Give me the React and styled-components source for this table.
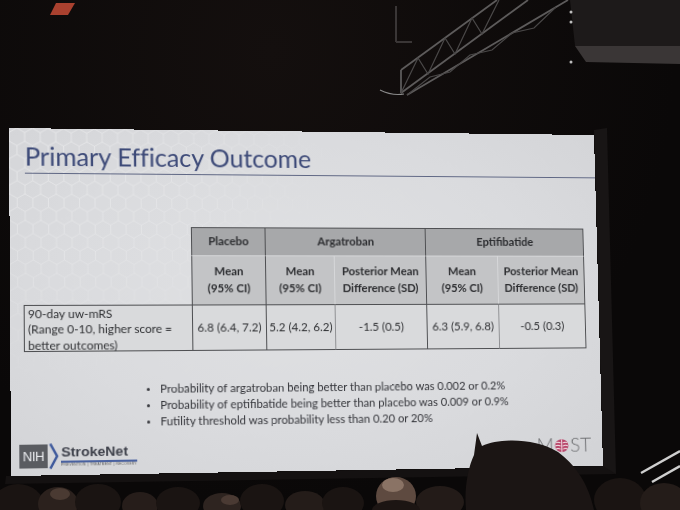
import React from 'react';
import styled, { createGlobalStyle } from 'styled-components';

// corners of the projected slide in the photo (TL, TR, BR, BL)
const SLIDE_W = 590;
const SLIDE_H = 340;
const CORNERS = [[9, 128], [594, 135], [603, 466], [11, 476]];

function quadMatrix(w, h, [x0, y0], [x1, y1], [x2, y2], [x3, y3]) {
  const dx1 = x1 - x2, dx2 = x3 - x2, dx3 = x0 - x1 + x2 - x3;
  const dy1 = y1 - y2, dy2 = y3 - y2, dy3 = y0 - y1 + y2 - y3;
  const den = dx1 * dy2 - dx2 * dy1;
  const g = (dx3 * dy2 - dx2 * dy3) / den;
  const k = (dx1 * dy3 - dx3 * dy1) / den;
  const a = x1 - x0 + g * x1, b = x3 - x0 + k * x3;
  const d = y1 - y0 + g * y1, e = y3 - y0 + k * y3;
  const m = [a / w, d / w, 0, g / w, b / h, e / h, 0, k / h, 0, 0, 1, 0, x0, y0, 0, 1];
  return `matrix3d(${m.map((v) => v.toFixed(7)).join(',')})`;
}

const SLIDE_TRANSFORM = quadMatrix(SLIDE_W, SLIDE_H, ...CORNERS);

const HEX =
  "url(\"data:image/svg+xml;utf8,<svg xmlns='http://www.w3.org/2000/svg' width='15' height='26'><path d='M7.5 0L15 4.33V13L7.5 17.32L0 13V4.33ZM7.5 17.32V26' fill='none' stroke='white' stroke-opacity='0.5' stroke-width='0.8'/></svg>\")";

const GlobalStyle = createGlobalStyle`
  html, body {
    margin: 0;
    padding: 0;
    background: #0b0909;
  }
`;

const BORDER = {
  dark: '1px solid #4e4f52',
  mid: '1px solid #8f9093',
  light: '1px solid #d6d7d9',
  none: '0',
};

const COLUMNS = [
  { key: 'placebo', group: 'Placebo', mean: '6.8 (6.4, 7.2)' },
  { key: 'arg', group: 'Argatroban', mean: '5.2 (4.2, 6.2)', diff: '-1.5 (0.5)' },
  { key: 'ept', group: 'Eptifibatide', mean: '6.3 (5.9, 6.8)', diff: '-0.5 (0.3)' },
];

const BULLETS = [
  'Probability of argatroban being better than placebo was 0.002 or 0.2%',
  'Probability of eptifibatide being better than placebo was 0.009 or 0.9%',
  'Futility threshold was probability less than 0.20 or 20%',
];

export default function App() {
  return (
    <>
      <GlobalStyle />
      <Scene>
        <Backdrop viewBox="0 0 680 510">
          <polygon points="594,130 607,128 616,474 603,472" fill="#181515" />
          <polygon points="6,476 603,466 616,474 5,484" fill="#141111" />
          <polygon points="50,15 68,15 75,3 56,3" fill="#a9412f" />
          <g stroke="#5d5b5b" strokeWidth="1.8" fill="none">
            <line x1="401" y1="70" x2="497" y2="0" />
            <line x1="401" y1="93" x2="528" y2="0" />
            <line x1="407" y1="95" x2="568" y2="0" />
            <line x1="401" y1="70" x2="401" y2="93" />
          </g>
          <g stroke="#4a4848" strokeWidth="1.2" fill="none">
            <polyline points="401,93 418,58 428,74 445,38 455,54 472,18 482,34 499,0" />
            <polyline points="407,95 430,77 450,72 470,55 492,50 512,33 534,28 556,7" />
          </g>
          <path d="M380 90 Q392 96 404 94" stroke="#8a8a8a" strokeWidth="1.2" fill="none" />
          <g stroke="#3a3636" strokeWidth="2" fill="none">
            <line x1="396" y1="6" x2="396" y2="42" />
            <line x1="396" y1="42" x2="412" y2="42" />
          </g>
          <polygon points="570,0 680,0 680,46 575,46" fill="#1d1a1a" />
          <polygon points="575,46 680,46 680,64 586,62" fill="#3a3636" />
          <g fill="#bdbdbd">
            <circle cx="571" cy="12" r="1.5" />
            <circle cx="571" cy="22" r="1.5" />
            <circle cx="571" cy="62" r="1.5" />
          </g>
          <g stroke="#cfcfcf" strokeWidth="2.4">
            <line x1="641" y1="473" x2="680" y2="451" />
            <line x1="652" y1="482" x2="680" y2="466" />
          </g>
        </Backdrop>

        <Slide>
          <TitleBar>
            <Title>Primary Efficacy Outcome</Title>
          </TitleBar>

          <Grid>
            <Corner />
            {COLUMNS.map((col) => (
              <Cell
                key={`${col.key}-group`}
                $bg="#a7a8aa"
                $left="dark"
                $top="dark"
                $right={col.key === 'ept'}
                $span={col.diff ? 2 : 1}
              >
                <HeadText>{col.group}</HeadText>
              </Cell>
            ))}

            {COLUMNS.map((col) => (
              <React.Fragment key={`${col.key}-sub`}>
                <Cell $bg="#c3c4c6" $left="dark" $top="light">
                  <HeadText>Mean<br />(95% CI)</HeadText>
                </Cell>
                {col.diff && (
                  <Cell $bg="#c3c4c6" $left="light" $top="light" $right={col.key === 'ept'}>
                    <HeadText>Posterior Mean<br />Difference (SD)</HeadText>
                  </Cell>
                )}
              </React.Fragment>
            ))}

            <LabelCell>
              90-day uw-mRS<br />
              (Range 0-10, higher score =<br />
              better outcomes)
            </LabelCell>
            {COLUMNS.map((col) => (
              <React.Fragment key={`${col.key}-val`}>
                <Cell $bg="#d9dadc" $left="dark" $top="dark" $bottom>
                  <ValueText>{col.mean}</ValueText>
                </Cell>
                {col.diff && (
                  <Cell $bg="#d9dadc" $left="mid" $top="dark" $bottom $right={col.key === 'ept'}>
                    <ValueText>{col.diff}</ValueText>
                  </Cell>
                )}
              </React.Fragment>
            ))}
          </Grid>

          <Bullets>
            {BULLETS.map((text) => (
              <Bullet key={text}>{text}</Bullet>
            ))}
          </Bullets>

          <Footer>
            <NihLogo>
              <NihBox>NIH</NihBox>
              <svg width="10" height="25" viewBox="0 0 10 25">
                <polyline points="1.5,0.5 8,12.5 1.5,24.5" fill="none" stroke="#3f5a9c" strokeWidth="2.4" />
              </svg>
              <NihBrand>
                <NihName>StrokeNet</NihName>
                <NihTag>PREVENTION | TREATMENT | RECOVERY</NihTag>
              </NihBrand>
            </NihLogo>

            <MostLogo>
              M
              <svg width="15" height="15" viewBox="0 0 16 16">
                <ellipse cx="8" cy="8.2" rx="7.4" ry="7" fill="#b8466a" />
                <g stroke="#f3e6ea" strokeWidth="1" fill="none" strokeLinecap="round">
                  <line x1="8" y1="1.5" x2="8" y2="15" />
                  <path d="M2 5 Q4.5 4 6.5 5.2" />
                  <path d="M1.5 8.3 Q4 7.2 6.5 8.5" />
                  <path d="M2.2 11.5 Q4.5 10.6 6.5 11.8" />
                  <path d="M9.5 5.2 Q11.5 4 14 5" />
                  <path d="M9.5 8.5 Q12 7.2 14.5 8.3" />
                  <path d="M9.5 11.8 Q11.5 10.6 13.8 11.5" />
                </g>
              </svg>
              ST
            </MostLogo>
          </Footer>
        </Slide>

        <Crowd viewBox="0 0 680 510">
          <g fill="#1a1412">
            <ellipse cx="18" cy="506" rx="26" ry="22" />
            <ellipse cx="58" cy="504" rx="20" ry="17" fill="#2b211d" />
            <ellipse cx="98" cy="502" rx="23" ry="18" />
            <ellipse cx="140" cy="506" rx="18" ry="14" fill="#261d1a" />
            <ellipse cx="178" cy="503" rx="22" ry="16" />
            <ellipse cx="222" cy="506" rx="19" ry="13" fill="#2e2420" />
            <ellipse cx="262" cy="501" rx="22" ry="17" />
            <ellipse cx="305" cy="505" rx="20" ry="14" fill="#241c19" />
            <ellipse cx="343" cy="503" rx="21" ry="16" />
            <ellipse cx="440" cy="502" rx="24" ry="16" fill="#231b18" />
            <ellipse cx="620" cy="500" rx="26" ry="22" />
            <ellipse cx="664" cy="503" rx="24" ry="20" fill="#241c19" />
          </g>
          <ellipse cx="396" cy="496" rx="20" ry="19" fill="#5e4a40" />
          <ellipse cx="393" cy="485" rx="11" ry="7" fill="#8a7365" />
          <ellipse cx="396" cy="510" rx="24" ry="10" fill="#1c1513" />
          <ellipse cx="230" cy="500" rx="9" ry="5" fill="#4a3a33" />
          <ellipse cx="60" cy="494" rx="10" ry="6" fill="#4a3a32" />
          <path
            d="M466 510 C464 488 468 468 474 455 L477 433 L482 446 C500 438 535 438 558 452 C575 465 588 482 594 510 Z"
            fill="#1b1514"
          />
        </Crowd>
      </Scene>
    </>
  );
}

const Scene = styled.div`
  position: relative;
  width: 680px;
  height: 510px;
  overflow: hidden;
  background: radial-gradient(ellipse at 40% 10%, #140f0e 0%, #0a0808 70%);
`;

const Backdrop = styled.svg`
  position: absolute;
  inset: 0;
  width: 680px;
  height: 510px;
  z-index: 0;
`;

const Crowd = styled.svg`
  position: absolute;
  inset: 0;
  width: 680px;
  height: 510px;
  z-index: 2;
  pointer-events: none;
`;

const Slide = styled.div`
  position: relative;
  z-index: 1;
  box-sizing: border-box;
  width: ${SLIDE_W}px;
  height: ${SLIDE_H}px;
  display: flex;
  flex-direction: column;
  transform-origin: 0 0;
  transform: ${SLIDE_TRANSFORM};
  background: radial-gradient(ellipse at 48% 45%, #e0e1e3 0%, #dadbde 55%, #d2d3d6 100%);
  font-family: Lato, "Open Sans", sans-serif;
  color: #2f3033;

  &::before {
    content: '';
    position: absolute;
    inset: 0;
    background-image: ${HEX};
    -webkit-mask-image: radial-gradient(ellipse 70% 95% at 0% 0%, #000 0%, rgba(0, 0, 0, 0.5) 45%, transparent 80%);
    mask-image: radial-gradient(ellipse 70% 95% at 0% 0%, #000 0%, rgba(0, 0, 0, 0.5) 45%, transparent 80%);
    pointer-events: none;
  }

  & > * {
    position: relative;
  }
`;

const TitleBar = styled.div`
  margin: 13px 0 0 15px;
  padding-bottom: 1px;
  border-bottom: 1.5px solid #5f6784;
`;

const Title = styled.h1`
  margin: 0;
  font-size: 24.9px;
  line-height: 1.2;
  font-weight: 400;
  color: #3d4a78;
  letter-spacing: -0.1px;
`;

const Grid = styled.div`
  display: grid;
  grid-template-columns: 163px 73px 69px 93px 74px 91px;
  grid-template-rows: 28px 49px 46px;
  margin: 52px 0 0 13px;
`;

const Corner = styled.div`
  grid-row: span 2;
`;

const Cell = styled.div`
  box-sizing: border-box;
  display: flex;
  align-items: center;
  justify-content: center;
  text-align: center;
  grid-column: span ${(p) => p.$span || 1};
  background: ${(p) => p.$bg};
  border-left: ${(p) => BORDER[p.$left || 'none']};
  border-top: ${(p) => BORDER[p.$top || 'none']};
  border-right: ${(p) => (p.$right ? BORDER.dark : '0')};
  border-bottom: ${(p) => (p.$bottom ? BORDER.dark : '0')};
`;

const HeadText = styled.span`
  font-size: 11.4px;
  font-weight: 700;
  line-height: 16.5px;
  color: #2c2d30;
`;

const ValueText = styled.span`
  font-size: 11.6px;
  color: #2f3033;
`;

const LabelCell = styled.div`
  box-sizing: border-box;
  padding: 0 0 0 3px;
  font-size: 11.6px;
  line-height: 15.5px;
  background: #d9dadc;
  border: ${BORDER.dark};
  border-right: 0;
  color: #2f3033;
`;

const Bullets = styled.ul`
  list-style: none;
  margin: 29px 0 0 131px;
  padding: 0;
`;

const Bullet = styled.li`
  position: relative;
  padding-left: 13px;
  font-size: 11.3px;
  line-height: 16px;
  color: #34353a;

  &::before {
    content: '';
    position: absolute;
    left: 0;
    top: 7px;
    width: 3px;
    height: 3px;
    border-radius: 50%;
    background: #3a3b40;
  }
`;

const Footer = styled.div`
  margin-top: auto;
  display: flex;
  align-items: flex-end;
  justify-content: space-between;
  padding: 0 12px 6px 8px;
`;

const NihLogo = styled.div`
  display: flex;
  align-items: center;
  gap: 1px;
`;

const NihBox = styled.span`
  display: flex;
  align-items: center;
  justify-content: center;
  width: 27px;
  height: 23px;
  background: #5a5c61;
  color: #eef0f3;
  font-family: "Liberation Sans", Arial, sans-serif;
  font-size: 12.5px;
  letter-spacing: -0.3px;
`;

const NihBrand = styled.div`
  display: flex;
  flex-direction: column;
  margin-left: 1px;
`;

const NihName = styled.span`
  font-family: "Liberation Sans", Arial, sans-serif;
  font-size: 13.6px;
  font-weight: 700;
  line-height: 14px;
  color: #3b3e48;
  padding-bottom: 1px;
  border-bottom: 2px solid #4a62a0;
`;

const NihTag = styled.span`
  font-family: "Liberation Sans", Arial, sans-serif;
  font-size: 3.2px;
  line-height: 5px;
  color: #555;
  letter-spacing: 0.3px;
  white-space: nowrap;
`;

const MostLogo = styled.div`
  display: flex;
  align-items: center;
  gap: 1px;
  margin-bottom: 6px;
  font-size: 19.5px;
  line-height: 20px;
  font-weight: 300;
  color: #6f7073;
`;
